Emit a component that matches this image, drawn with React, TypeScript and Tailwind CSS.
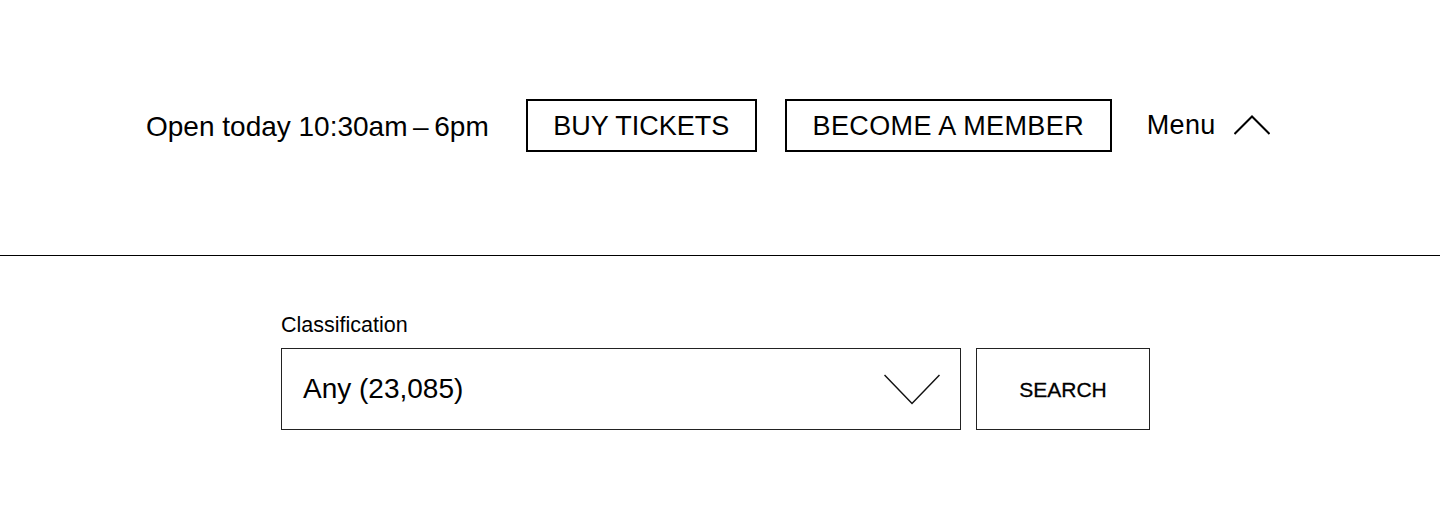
import React from "react";

export default function App() {
  return (
    <div className="min-h-[511px] w-full bg-white text-black font-['Liberation_Sans',Arial,sans-serif]">
      {/* Top bar */}
      <header className="h-[256px] border-b border-black flex items-center pb-[4px] pl-[146px]">
        <p className="text-[28px] leading-none pt-[3px]">
          Open today 10:30am&thinsp;–&thinsp;6pm
        </p>
        <a
          href="#"
          className="ml-[37px] w-[231px] h-[53px] flex items-center justify-center border-2 border-black text-[27px] leading-none pt-[1px]"
        >
          BUY TICKETS
        </a>
        <a
          href="#"
          className="ml-[28px] w-[327px] h-[53px] flex items-center justify-center border-2 border-black text-[27px] leading-none tracking-[0.4px] pt-[1px]"
        >
          BECOME A MEMBER
        </a>
        <button className="ml-[35px] flex items-center gap-[18px] text-[27px] leading-none tracking-[0.3px]">
          Menu
          <svg width="36" height="20" viewBox="0 0 36 20" fill="none" className="-mt-[2px]">
            <path d="M0.5 19 L18 1.5 L35.5 19" stroke="black" strokeWidth="2" />
          </svg>
        </button>
      </header>

      {/* Search form */}
      <section className="pl-[281px] pt-[57px]">
        <label className="block text-[21.5px] leading-[25px] mb-[10px]">Classification</label>
        <div className="flex gap-[15px]">
          <div className="w-[680px] h-[82px] border border-[#222] flex items-center justify-between pl-[21px] pr-[20px]">
            <span className="text-[28px] leading-none">Any (23,085)</span>
            <svg width="56" height="31" viewBox="0 0 56 31" fill="none">
              <path d="M0.5 1 L28 29.5 L55.5 1" stroke="#111" strokeWidth="1.5" />
            </svg>
          </div>
          <button className="w-[174px] h-[82px] border border-[#222] flex items-center justify-center text-[21px] leading-none [-webkit-text-stroke:0.3px_black]">
            SEARCH
          </button>
        </div>
      </section>
    </div>
  );
}
